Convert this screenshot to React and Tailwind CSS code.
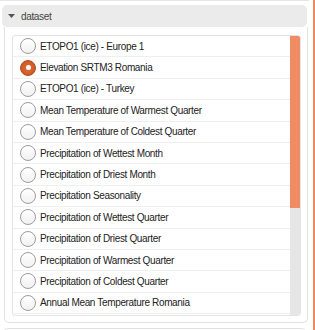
import React from 'react';

const items = [
  'ETOPO1 (ice) - Europe 1',
  'Elevation SRTM3 Romania',
  'ETOPO1 (ice) - Turkey',
  'Mean Temperature of Warmest Quarter',
  'Mean Temperature of Coldest Quarter',
  'Precipitation of Wettest Month',
  'Precipitation of Driest Month',
  'Precipitation Seasonality',
  'Precipitation of Wettest Quarter',
  'Precipitation of Driest Quarter',
  'Precipitation of Warmest Quarter',
  'Precipitation of Coldest Quarter',
  'Annual Mean Temperature Romania',
];

function Radio({ checked }) {
  if (checked) {
    return (
      <span className="flex h-[16px] w-[16px] shrink-0 items-center justify-center rounded-full border border-[#b24c1f] bg-[radial-gradient(circle,#e0703c_0%,#cf5a27_70%,#c0501f_100%)]">
        <span className="h-[5px] w-[5px] rounded-full bg-white" />
      </span>
    );
  }
  return (
    <span className="h-[16px] w-[16px] shrink-0 rounded-full border border-[#9c9c9c] bg-[linear-gradient(#ffffff,#f1f1f1)]" />
  );
}

export default function App() {
  return (
    <div className="flex h-[330px] w-[315px] overflow-hidden bg-white font-['Liberation_Sans',Arial,sans-serif] text-[10px] tracking-[-0.35px]">
      <div className="flex w-[309px] shrink-0 flex-col border-t border-[#e6e6e6] pt-[4px]">
        {/* Header */}
        <div className="mx-[2px] flex h-[22px] shrink-0 items-center gap-[6px] rounded-[5px] bg-[#ebebeb] pl-[6px] text-[#444]">
          <svg width="7" height="4" viewBox="0 0 7 4">
            <polygon points="0,0 7,0 3.5,4" fill="#555" />
          </svg>
          <span>dataset</span>
        </div>

        {/* Body */}
        <div className="ml-[4px] mr-[1px] shrink-0 rounded-b-[5px] border-x border-b border-[#e2e2e2] pb-[6px] pl-[7px] pr-[6px] pt-[8px]">
          <div className="flex h-[281px] overflow-hidden rounded-[3px] border border-[#e4e4e4]">
            <div className="flex-1">
              {items.map((label, i) => (
                <div
                  key={label}
                  className="flex h-[21.4px] items-center gap-[4px] border-b border-[#efefef] pl-[7px] text-[#222]"
                >
                  <Radio checked={i === 1} />
                  <span className="whitespace-nowrap">{label}</span>
                </div>
              ))}
            </div>
            <div className="w-[10px] bg-[#e6e6e6]">
              <div className="h-[172px] bg-[#f08c64]" />
            </div>
          </div>
        </div>

        {/* Next panel */}
        <div className="mx-[3px] mt-[5px] h-[10px] shrink-0 rounded-t-[5px] border-x border-t border-[#e2e2e2]" />
      </div>
      <div className="ml-[4px] w-[2px] shrink-0 bg-[#f08a5d]" />
    </div>
  );
}
